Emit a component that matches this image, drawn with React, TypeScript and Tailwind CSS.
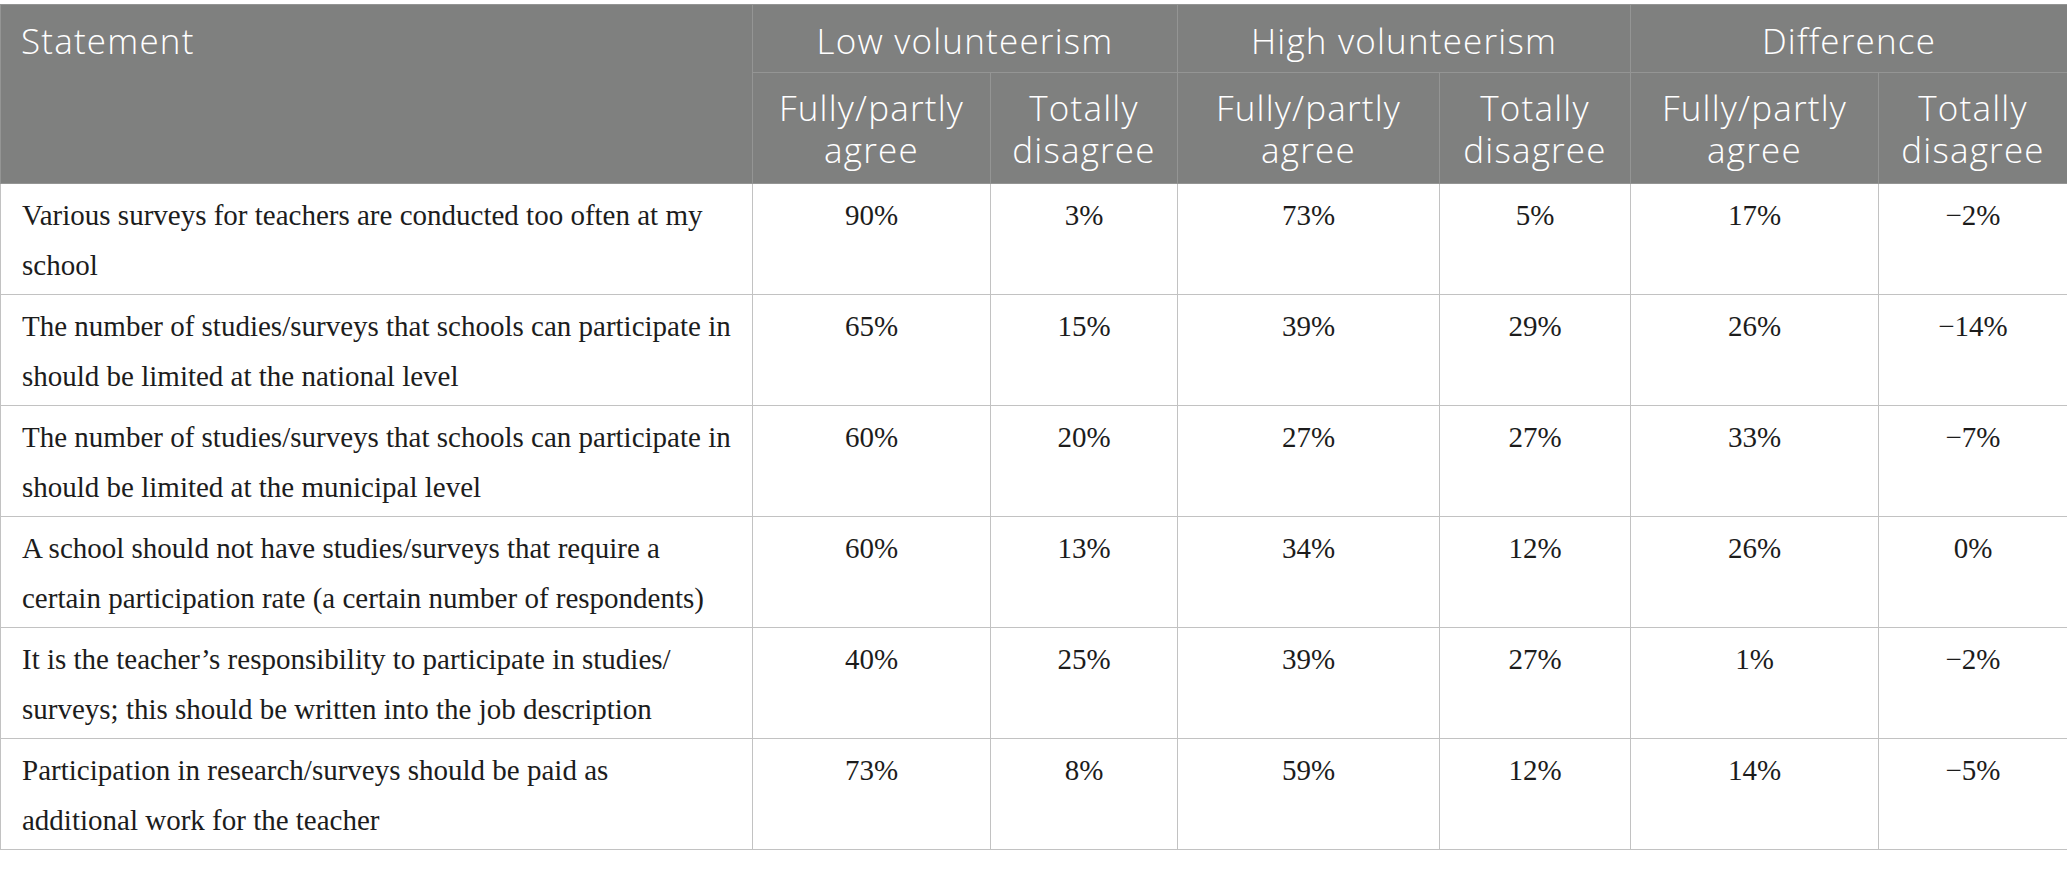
const groups = ["Low volunteerism", "High volunteerism", "Difference"];

const rows: { text: [string, string]; values: string[] }[] = [
  {
    text: ["Various surveys for teachers are conducted too often at my", "school"],
    values: ["90%", "3%", "73%", "5%", "17%", "\u22122%"],
  },
  {
    text: ["The number of studies/surveys that schools can participate in", "should be limited at the national level"],
    values: ["65%", "15%", "39%", "29%", "26%", "\u221214%"],
  },
  {
    text: ["The number of studies/surveys that schools can participate in", "should be limited at the municipal level"],
    values: ["60%", "20%", "27%", "27%", "33%", "\u22127%"],
  },
  {
    text: ["A school should not have studies/surveys that require a", "certain participation rate (a certain number of respondents)"],
    values: ["60%", "13%", "34%", "12%", "26%", "0%"],
  },
  {
    text: ["It is the teacher\u2019s responsibility to participate in studies/", "surveys; this should be written into the job description"],
    values: ["40%", "25%", "39%", "27%", "1%", "\u22122%"],
  },
  {
    text: ["Participation in research/surveys should be paid as", "additional work for the teacher"],
    values: ["73%", "8%", "59%", "12%", "14%", "\u22125%"],
  },
];

const widths = ["w-[752px]", "w-[238px]", "w-[187px]", "w-[262px]", "w-[191px]", "w-[248px]", "w-[189px]"];

export default function App() {
  return (
    <div className="min-h-screen bg-white pt-[4px]">
      <table className="w-[2067px] table-fixed border-collapse border border-[#c2c2c2]">
        <colgroup>
          {widths.map((w, i) => (
            <col key={i} className={w} />
          ))}
        </colgroup>
        <thead className="bg-[#7f807f] font-['Open_Sans',sans-serif] text-[35px] leading-[42px] tracking-[1.2px] text-white">
          <tr className="h-[68px]">
            <th
              rowSpan={2}
              className="border border-[#949594] px-[20px] pt-[15px] text-left align-top font-[350]"
            >
              Statement
            </th>
            {groups.map((g) => (
              <th
                key={g}
                colSpan={2}
                className="border border-[#949594] pt-[15px] text-center align-top font-[350]"
              >
                {g}
              </th>
            ))}
          </tr>
          <tr className="h-[111px]">
            {groups.map((g) => (
              <>
                <th key={g + "a"} className="border border-[#949594] pt-[14px] text-center align-top font-[350]">
                  Fully/partly
                  <br />
                  agree
                </th>
                <th key={g + "b"} className="border border-[#949594] pt-[14px] text-center align-top font-[350]">
                  Totally
                  <br />
                  disagree
                </th>
              </>
            ))}
          </tr>
        </thead>
        <tbody className="font-['Liberation_Serif',serif] text-[29px] leading-[50px] text-[#1c1c1c]">
          {rows.map((r, i) => (
            <tr key={i} className="h-[111px]">
              <td className="whitespace-nowrap border border-[#c2c2c2] px-[21px] pt-[6px] align-top">
                {r.text[0]}
                <br />
                {r.text[1]}
              </td>
              {r.values.map((v, j) => (
                <td key={j} className="border border-[#c2c2c2] pt-[6px] text-center align-top">
                  {v}
                </td>
              ))}
            </tr>
          ))}
        </tbody>
      </table>
    </div>
  );
}
